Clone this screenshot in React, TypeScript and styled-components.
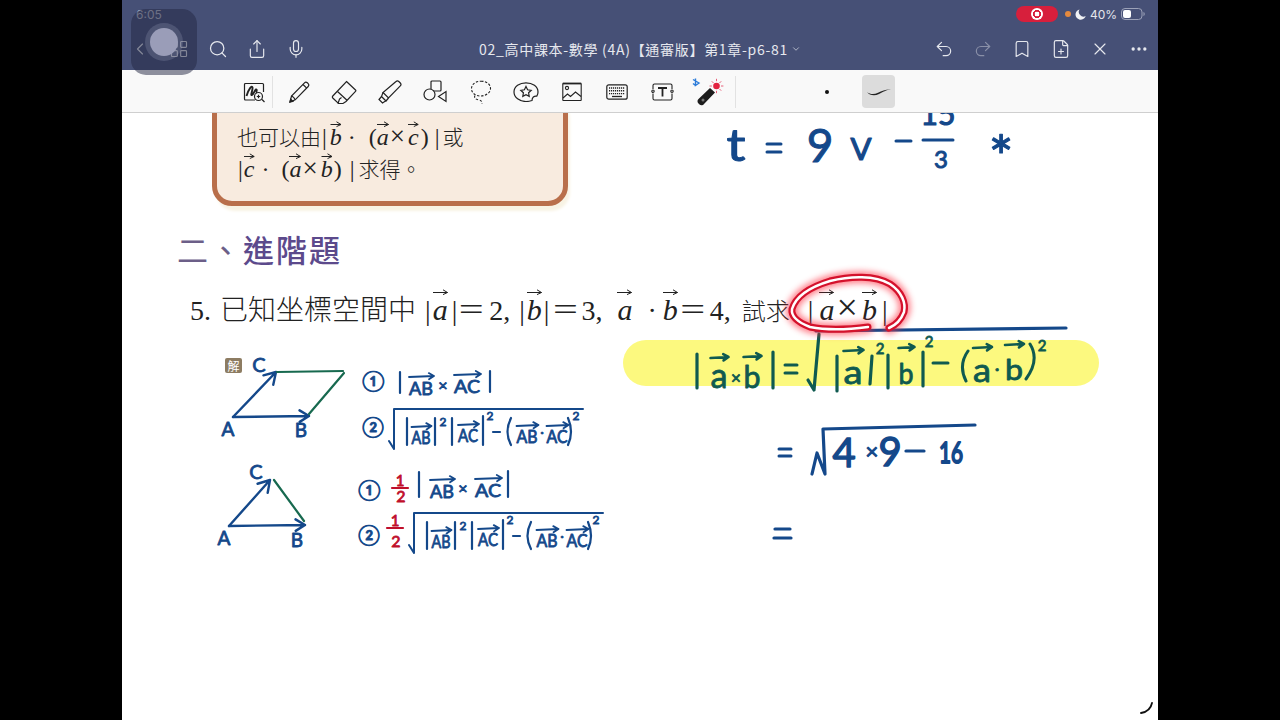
import React from "react";
import styled, { createGlobalStyle } from "styled-components";
import {
  Bookmark,
  ChevronDown,
  ChevronLeft,
  Ellipsis,
  FilePlus,
  LayoutGrid,
  Mic,
  Redo2,
  Search,
  Share,
  Undo2,
  X,
} from "lucide-react";

const CJK = `"Noto Sans CJK TC", "Noto Sans", sans-serif`;
const SERIF = `"Liberation Serif", "Noto Sans CJK TC", serif`;
const BLUE = "#14488a";
const GREEN = "#0f5a50";
const LINE_GREEN = "#17694f";
const RED = "#c00f2b";

const GlobalStyle = createGlobalStyle`
  html, body {
    margin: 0;
    height: 100%;
    background: #000;
  }
  #root {
    height: 100%;
  }
`;

const Screen = styled.div`
  position: relative;
  width: 1036px;
  height: 720px;
  margin: 0 auto;
  display: flex;
  flex-direction: column;
  background: #fff;
  overflow: hidden;
  font-family: ${CJK};
`;

const Header = styled.header`
  height: 70px;
  flex: none;
  background: #465076;
  color: #eceef3;
`;

const StatusBar = styled.div`
  height: 28px;
  display: flex;
  align-items: center;
  justify-content: space-between;
  padding: 0 13px 0 14px;
  font-family: "Inter", sans-serif;
  font-size: 12px;
`;

const Clock = styled.span`
  color: #b8bbc8;
`;

const StatusGroup = styled.div`
  display: flex;
  align-items: center;
`;

const RecordPill = styled.div`
  width: 42px;
  height: 16px;
  border-radius: 8px;
  background: #d71f3c;
  display: flex;
  align-items: center;
  justify-content: center;
`;

const RecordDot = styled.div`
  width: 12px;
  height: 12px;
  border-radius: 50%;
  background: radial-gradient(circle, #fff 0 2.2px, #d71f3c 2.6px 3.8px, #fff 4.2px);
`;

const OrangeDot = styled.div`
  width: 6px;
  height: 6px;
  margin-left: 7px;
  border-radius: 50%;
  background: #e58a3e;
`;

const Percent = styled.span`
  margin-left: 4px;
  color: #e4e6ec;
`;

const NavRow = styled.div`
  height: 42px;
  display: grid;
  grid-template-columns: 1fr auto 1fr;
  align-items: center;
`;

const NavGroup = styled.div<{ $end?: boolean }>`
  display: flex;
  align-items: center;
  gap: 19px;
  justify-content: ${(p) => (p.$end ? "flex-end" : "flex-start")};
  padding: ${(p) => (p.$end ? "0 9px 0 0" : "0 0 0 8px")};
  color: #e6e8ee;
`;

const Title = styled.div`
  display: flex;
  align-items: center;
  gap: 3px;
  font-size: 14px;
  letter-spacing: 0.7px;
  color: #e6e8ee;
  white-space: nowrap;
`;

const Toolbar = styled.div`
  height: 42px;
  flex: none;
  display: flex;
  align-items: center;
  padding-left: 120px;
  background: #f9f9f9;
  border-bottom: 1px solid #cfcfcf;
`;

const ToolCell = styled.div<{ $wide?: boolean }>`
  width: ${(p) => (p.$wide ? "45.5px" : "24px")};
  height: 34px;
  flex: none;
  margin-top: 2px;
  display: flex;
  align-items: center;
  justify-content: center;
`;

const ToolDivider = styled.div<{ $left: number; $right: number }>`
  width: 1px;
  height: 32px;
  flex: none;
  margin: 2px ${(p) => p.$right}px 0 ${(p) => p.$left}px;
  background: #e2e2e2;
`;

const PenDot = styled.div`
  width: 4px;
  height: 4px;
  margin: 2px 0 0 89px;
  flex: none;
  border-radius: 50%;
  background: #111;
`;

const BrushButton = styled.div`
  width: 33px;
  height: 33px;
  margin: 1px 0 0 33px;
  flex: none;
  border-radius: 4px;
  background: #dcdcdc;
  display: flex;
  align-items: center;
  justify-content: center;
`;

const AssistiveTouch = styled.div`
  position: absolute;
  left: 9px;
  top: 9px;
  width: 66px;
  height: 66px;
  border-radius: 15px;
  background: rgba(34, 38, 66, 0.5);
  display: flex;
  align-items: center;
  justify-content: center;
`;

const TouchRing = styled.div`
  width: 38px;
  height: 38px;
  border-radius: 50%;
  background: rgba(170, 174, 200, 0.22);
  display: flex;
  align-items: center;
  justify-content: center;
`;

const TouchKnob = styled.div`
  width: 28px;
  height: 28px;
  border-radius: 50%;
  background: #9a9db8;
`;

const Page = styled.main`
  position: relative;
  flex: 1;
  overflow: hidden;
  background: #fff;
`;

const Callout = styled.div`
  box-sizing: border-box;
  width: 356px;
  height: 113px;
  margin: -20px 0 0 90px;
  padding: 22px 20px 0;
  border: 5px solid #b96f4b;
  border-radius: 20px;
  background: #f8ebdf;
  box-shadow: 3px 6px 3px -1px #f8f3e4;
  font-family: ${SERIF};
  font-size: 24px;
  color: #222;
`;

const CalloutLine = styled.div`
  display: flex;
  align-items: baseline;
  height: 32px;
  line-height: 32px;
  white-space: nowrap;
`;

const Cjk = styled.span<{ $ml?: number; $size?: number }>`
  font-family: ${CJK};
  font-weight: 300;
  font-size: ${(p) => p.$size ?? 21}px;
  line-height: 1;
  margin-left: ${(p) => p.$ml ?? 0}px;
`;

const Heading = styled.h2`
  margin: 23px 0 0 55px;
  font-size: 31px;
  line-height: 40px;
  font-weight: 500;
  letter-spacing: 2px;
  color: #5c4a8c;
`;

const HeadingLead = styled.span`
  font-weight: 400;
  color: #6c5f88;
`;

const Question = styled.div`
  display: flex;
  align-items: baseline;
  height: 40px;
  margin: 18px 0 0 68px;
  font-family: ${SERIF};
  font-size: 28px;
  line-height: 40px;
  color: #222;
  white-space: nowrap;
`;

const Plain = styled.span<{ $ml?: number; $size?: number }>`
  margin-left: ${(p) => p.$ml ?? 0}px;
  ${(p) => (p.$size ? `font-size: ${p.$size}px;` : "")}
`;

const VarBox = styled.span<{ $ml?: number; $size?: number }>`
  position: relative;
  display: inline-block;
  font-style: italic;
  margin-left: ${(p) => p.$ml ?? 0}px;
  ${(p) => (p.$size ? `font-size: ${p.$size}px;` : "")}
`;

const VecArrow = styled.svg<{ $top: number }>`
  position: absolute;
  left: 0;
  top: ${(p) => p.$top}px;
  width: 100%;
  height: 7px;
  overflow: visible;
`;

const SolveBadge = styled.div`
  width: 17px;
  height: 15px;
  margin: 31px 0 0 103px;
  border-radius: 2px;
  background: #8d7c62;
  color: #fff;
  font-size: 12px;
  line-height: 15px;
  text-align: center;
`;

const InkLayer = styled.svg`
  position: absolute;
  left: 0;
  top: 0;
  width: 1036px;
  height: 607px;
  pointer-events: none;
`;

const Stroke = styled.path<{ $c?: string; $w?: number }>`
  fill: none;
  stroke: ${(p) => p.$c ?? BLUE};
  stroke-width: ${(p) => p.$w ?? 2.2};
  stroke-linecap: round;
  stroke-linejoin: round;
`;

const Ink = styled.text<{ $c?: string; $size: number; $w?: number }>`
  font-family: "Lato", "Open Sans", sans-serif;
  font-weight: 400;
  font-size: ${(p) => p.$size}px;
  fill: ${(p) => p.$c ?? BLUE};
  stroke: ${(p) => p.$c ?? BLUE};
  stroke-width: ${(p) => p.$w ?? 0.8};
  stroke-linejoin: round;
  stroke-linecap: round;
  text-anchor: middle;
`;

const Glow = styled.path`
  fill: none;
  stroke: #ff2b3d;
  stroke-width: 12;
  stroke-linecap: round;
  stroke-linejoin: round;
  opacity: 0.6;
  filter: blur(3px);
`;

const Vec = ({
  children,
  w,
  ml,
  size,
  top = 0,
}: {
  children: React.ReactNode;
  w: number;
  ml?: number;
  size?: number;
  top?: number;
}) => (
  <VarBox $ml={ml} $size={size}>
    <VecArrow $top={top} viewBox={`0 0 ${w} 7`}>
      <path
        d={`M0 3.5H${w - 0.5}M${w - 5} 0.8L${w - 0.5} 3.5L${w - 5} 5.6`}
        fill="none"
        stroke="#222"
        strokeWidth="1"
      />
    </VecArrow>
    {children}
  </VarBox>
);

const arrowPath = (x1: number, y1: number, x2: number, y2: number, head = 9) => {
  const a = Math.atan2(y2 - y1, x2 - x1);
  const p1 = [x2 - head * Math.cos(a - 0.55), y2 - head * Math.sin(a - 0.55)];
  const p2 = [x2 - head * Math.cos(a + 0.55), y2 - head * Math.sin(a + 0.55)];
  return `M${x1} ${y1}L${x2} ${y2}M${p1[0]} ${p1[1]}L${x2} ${y2}L${p2[0]} ${p2[1]}`;
};

const InkVec = ({
  x,
  y,
  label,
  size = 17,
  c = BLUE,
  w = 22,
  rise,
  weight = 1.8,
}: {
  x: number;
  y: number;
  label: string;
  size?: number;
  c?: string;
  w?: number;
  rise?: number;
  weight?: number;
}) => {
  const r = rise ?? size;
  return (
    <>
      <Ink x={x} y={y} $size={size} $c={c} textLength={w} lengthAdjust="spacingAndGlyphs">
        {label}
      </Ink>
      <Stroke d={arrowPath(x - w / 2, y - r, x + w / 2 + 1, y - r - 1, 6)} $c={c} $w={weight} />
    </>
  );
};

// |AB|^2|AC|^2-(AB.AC)^2 under a root, placed for the lower row and shifted for the upper one
const RootExpression = ({ dx = 0, dy = 0 }: { dx?: number; dy?: number }) => (
  <g transform={`translate(${dx} ${dy})`}>
    <Stroke d="M409 545L414 553L414 513H603" $w={2} />
    <Stroke d="M427 522V549M455 522V549M472 522V549M503 520V549" />
    <InkVec x={441} y={548} label="AB" size={17} w={19} />
    <Ink x={463} y={530} $size={12}>2</Ink>
    <InkVec x={488} y={546} label="AC" size={17} w={20} />
    <Ink x={510} y={524} $size={12}>2</Ink>
    <Stroke d="M513 536H520" />
    <Stroke d="M531 522Q524 536 531 549M588 522Q594 536 588 549" />
    <InkVec x={547} y={547} label="AB" size={17} w={21} />
    <Ink x={562} y={541} $size={14}>·</Ink>
    <InkVec x={577} y={547} label="AC" size={17} w={21} />
    <Ink x={596} y={524} $size={12}>2</Ink>
  </g>
);

const ZoomNoteIcon = () => (
  <svg width="22" height="22" viewBox="0 0 22 22" fill="none" stroke="#222" strokeWidth="1.2">
    <path d="M12 19H2.5a1 1 0 0 1-1-1V3.5a1 1 0 0 1 1-1h17a1 1 0 0 1 1 1V11" />
    <path d="M3.500 15C6 7 9 4 9.500 6.500S7 15 9 14s2.500-5 4-5.500 0 3 1 3" strokeWidth="1.900" />
    <circle cx="15.500" cy="15.500" r="4" />
    <path d="M19 18.500l2.500 2.500M13.800 15.500h3.400M15.500 13.800v3.400" />
  </svg>
);

const PencilIcon = () => (
  <svg width="24" height="24" viewBox="0 0 24 24" fill="none" stroke="#222" strokeWidth="1.2">
    <path d="M3 22l1.500-6L17.500 2.800a2 2 0 0 1 2.800 0l.9.9a2 2 0 0 1 0 2.800L8.200 19.800z" />
    <path d="M4.500 16c1 .2 3.300 2.400 3.700 3.800M16 4.500l3.700 3.700" />
    <path d="M3 22l.7-2.900 2.200 2.200z" fill="#222" />
  </svg>
);

const EraserIcon = () => (
  <svg width="26" height="25" viewBox="0 0 26 25" fill="none" stroke="#222" strokeWidth="1.2">
    <path d="M15.500 1.500l9 8.500a1 1 0 0 1 0 1.400L15 21.500l-3 2H7.500L1.800 18a1.500 1.500 0 0 1 0-2z" />
    <path d="M6.500 11.500l9.500 8.800M7 23.500l1.500-4.500 2-1.500" />
  </svg>
);

const HighlighterIcon = () => (
  <svg width="24" height="25" viewBox="0 0 24 25" fill="none" stroke="#222" strokeWidth="1.2">
    <path d="M18 1.500a2 2 0 0 1 2.800 0l1.500 1.500a2 2 0 0 1 0 2.800L10.500 18l-5.500-5.500z" />
    <path d="M5 12.500l-1.500 4 4.500 4.500 2.500-3M3.500 16.500l-2.500 3 3.500 3.500 3-2" />
  </svg>
);

const ShapesIcon = () => (
  <svg width="24" height="24" viewBox="0 0 24 24" fill="none" stroke="#222" strokeWidth="1.2">
    <rect x="8" y="1" width="10" height="10" rx="1" />
    <circle cx="6.500" cy="14.500" r="5.500" fill="#f9f9f9" />
    <path d="M23 11.500v10l-7.500-5z" />
  </svg>
);

const LassoIcon = () => (
  <svg width="22" height="24" viewBox="0 0 22 24" fill="none" stroke="#222" strokeWidth="1.1" strokeDasharray="2.4 1.6">
    <path d="M11 1.200c5.500 0 9.500 3 9.500 7.300s-5 7.500-10 7.500c-5 0-9-3-9-7.300S5.500 1.200 11 1.200z" />
    <path d="M5 15.500c-1.500 2.500 1 4 4 4.500s3 2 3 3.500" />
  </svg>
);

const StickerIcon = () => (
  <svg width="26" height="20" viewBox="0 0 26 20" fill="none" stroke="#222" strokeWidth="1.2">
    <path d="M19 18.500c-1.800.7-3.800 1-6 1C6.500 19.500 1 15.500 1 10S6.500.8 13 .8 25 4.500 25 10c0 1.500-.4 3-1.200 4.200-2.800-.4-4.800 1.200-4.800 4.300z" />
    <path d="M13 4.500l1.600 3.300 3.600.5-2.600 2.500.6 3.600-3.200-1.700-3.200 1.700.6-3.600-2.600-2.500 3.600-.5z" />
  </svg>
);

const ImageIcon = () => (
  <svg width="20" height="20" viewBox="0 0 20 20" fill="none" stroke="#222" strokeWidth="1.1">
    <rect x="0.800" y="1.500" width="18.400" height="17" rx="0.500" />
    <path d="M0.800 1.500h18.400" strokeWidth="1.800" />
    <circle cx="5" cy="6" r="1.600" />
    <path d="M1 16l4.500-4 3 2.500 5-4.500 5.500 4.500" />
  </svg>
);

const KeyboardIcon = () => (
  <svg width="22" height="16" viewBox="0 0 22 16" fill="none" stroke="#222">
    <rect x="0.800" y="0.800" width="20.400" height="14.400" rx="2" strokeWidth="1.200" />
    <path d="M3 4h16M3 6.800h16M3 9.600h16" strokeWidth="1.400" strokeDasharray="1.200 0.800" />
    <path d="M6 12.500h10" strokeWidth="1.300" />
  </svg>
);

const TextBoxIcon = () => (
  <svg width="23" height="18" viewBox="0 0 23 18" fill="none" stroke="#222" strokeWidth="1.100">
    <path d="M2 6V2.500a1.500 1.500 0 0 1 1.500-1.500h16A1.500 1.500 0 0 1 21 2.500V6M2 10.500v5A1.500 1.500 0 0 0 3.500 17h16a1.500 1.500 0 0 0 1.500-1.500v-5" />
    <circle cx="2" cy="8.200" r="1.200" />
    <circle cx="21" cy="8.200" r="1.200" />
    <path d="M7 5h9M11.500 5v8.500" strokeWidth="1.800" />
  </svg>
);

const LaserIcon = () => (
  <svg width="34" height="30" viewBox="0 0 34 30" fill="none">
    <path d="M4.500 1.500v7l3.500-2.500-6-3.500M4.500 8.500L2 6.500" stroke="#2b7bd9" strokeWidth="1.400" />
    <path d="M19 11l5 4.500L13 27a3 3 0 0 1-4.500.500l-1-1a3 3 0 0 1 0-4.500z" fill="#1d1d1d" />
    <circle cx="12" cy="23" r="1.500" fill="#777" />
    <circle cx="25.500" cy="9" r="3.300" fill="#e3213f" />
    <path
      d="M25.500 1.800v2.400M25.500 13.800v2.400M18.500 9h2.400M30 9h2.400M20.800 4.300l1.700 1.700M28.500 12l1.700 1.700M30.200 4.300l-1.700 1.700"
      stroke="#e8607a"
      strokeWidth="1"
    />
  </svg>
);

const BrushIcon = () => (
  <svg width="26" height="10" viewBox="0 0 26 10">
    <path d="M1 5c3 2.500 7 2.800 11 .8 4-2 8-3.600 13-3.300-5 .2-8 2.700-12 4.600C8.500 9.200 3.500 8.500 1 5z" fill="#222" />
  </svg>
);

const BatteryMark = styled.svg`
  margin-left: 4px;
`;

const BatteryIcon = () => (
  <BatteryMark width="24" height="12" viewBox="0 0 24 12">
    <rect x="0.500" y="0.500" width="20.500" height="11" rx="3.500" fill="none" stroke="#9ca2b8" />
    <rect x="2" y="2" width="8" height="8" rx="2" fill="#fff" />
    <path d="M22.500 4v4c.8-.3 1.200-1 1.200-2s-.4-1.700-1.200-2z" fill="#9ca2b8" />
  </BatteryMark>
);

const MoonMark = styled.svg`
  margin-left: 4px;
`;

const MoonIcon = () => (
  <MoonMark width="11" height="11" viewBox="0 0 11 11">
    <path d="M4.500.4A5.200 5.200 0 1 0 10.700 7 4.700 4.700 0 0 1 4.500.4z" fill="#f1f2f5" />
  </MoonMark>
);

const TOOLS = [
  PencilIcon,
  EraserIcon,
  HighlighterIcon,
  ShapesIcon,
  LassoIcon,
  StickerIcon,
  ImageIcon,
  KeyboardIcon,
  TextBoxIcon,
  LaserIcon,
];

const LASSO =
  "M868 327C845 330 825 330 810 327C797 322 791 316 792 309C796 296 810 287 830 281C850 276 875 275 890 284C902 292 906 303 904 312C901 320 896 325 889 328";

const App = () => (
  <>
    <GlobalStyle />
    <Screen>
      <Header>
        <StatusBar>
          <Clock>6:05</Clock>
          <StatusGroup>
            <RecordPill>
              <RecordDot />
            </RecordPill>
            <OrangeDot />
            <MoonIcon />
            <Percent>40%</Percent>
            <BatteryIcon />
          </StatusGroup>
        </StatusBar>
        <NavRow>
          <NavGroup>
            <ChevronLeft size={20} strokeWidth={1.4} />
            <LayoutGrid size={20} strokeWidth={1.4} />
            <Search size={20} strokeWidth={1.5} />
            <Share size={20} strokeWidth={1.4} />
            <Mic size={20} strokeWidth={1.4} />
          </NavGroup>
          <Title>
            02_高中課本-數學 (4A)【通審版】第1章-p6-81
            <ChevronDown size={10} strokeWidth={1.6} />
          </Title>
          <NavGroup $end>
            <Undo2 size={20} strokeWidth={1.4} />
            <Redo2 size={20} strokeWidth={1.4} color="#8a90a8" />
            <Bookmark size={20} strokeWidth={1.4} />
            <FilePlus size={20} strokeWidth={1.4} />
            <X size={20} strokeWidth={1.4} />
            <Ellipsis size={20} strokeWidth={2} />
          </NavGroup>
        </NavRow>
      </Header>

      <Toolbar>
        <ToolCell>
          <ZoomNoteIcon />
        </ToolCell>
        <ToolDivider $left={6} $right={3} />
        {TOOLS.map((Icon, i) => (
          <ToolCell $wide key={i}>
            <Icon />
          </ToolCell>
        ))}
        <ToolDivider $left={4} $right={0} />
        <PenDot />
        <BrushButton>
          <BrushIcon />
        </BrushButton>
      </Toolbar>

      <Page>
        <Callout>
          <CalloutLine>
            <Cjk>也可以由</Cjk>
            <Plain $ml={1}>|</Plain>
            <Vec w={11} ml={3}>b</Vec>
            <Plain $ml={6}>·</Plain>
            <Plain $ml={13}>(</Plain>
            <Vec w={12}>a</Vec>
            <Plain $ml={1} $size={27}>×</Plain>
            <Vec w={11} ml={3}>c</Vec>
            <Plain $ml={2}>)</Plain>
            <Plain $ml={6}>|</Plain>
            <Cjk $ml={3}>或</Cjk>
          </CalloutLine>
          <CalloutLine>
            <Plain $ml={1}>|</Plain>
            <Vec w={11} ml={1}>c</Vec>
            <Plain $ml={7}>·</Plain>
            <Plain $ml={12}>(</Plain>
            <Vec w={12}>a</Vec>
            <Plain $ml={1} $size={27}>×</Plain>
            <Vec w={11} ml={3}>b</Vec>
            <Plain $ml={1}>)</Plain>
            <Plain $ml={8}>|</Plain>
            <Cjk $ml={4}>求得。</Cjk>
          </CalloutLine>
        </Callout>

        <Heading>
          <HeadingLead>二、</HeadingLead>進階題
        </Heading>

        <Question>
          <Plain>5.</Plain>
          <Cjk $ml={9} $size={28}>已知坐標空間中</Cjk>
          <Plain $ml={9}>|</Plain>
          <Vec w={15} ml={2} size={30} top={-1}>a</Vec>
          <Plain $ml={4}>|</Plain>
          <Cjk $size={28}>＝</Cjk>
          <Plain $ml={4}>2,</Plain>
          <Plain $ml={9}>|</Plain>
          <Vec w={15} ml={2} size={30} top={-1}>b</Vec>
          <Plain $ml={2}>|</Plain>
          <Cjk $ml={2} $size={28}>＝</Cjk>
          <Plain $ml={2}>3,</Plain>
          <Vec w={15} ml={15} size={30} top={-1}>a</Vec>
          <Plain $ml={15}>·</Plain>
          <Vec w={15} ml={6} size={30} top={-1}>b</Vec>
          <Cjk $ml={1} $size={28}>＝</Cjk>
          <Plain $ml={3}>4,</Plain>
          <Cjk $ml={11} $size={24}>試求</Cjk>
          <Plain $ml={18}>|</Plain>
          <Vec w={15} ml={6} size={30} top={-1}>a</Vec>
          <Plain $ml={2} $size={38}>×</Plain>
          <Vec w={15} ml={4} size={30} top={-1}>b</Vec>
          <Plain $ml={5}>|</Plain>
        </Question>

        <SolveBadge>解</SolveBadge>

        <InkLayer viewBox="122 113 1036 607">
          {/* top right working */}
          <Ink x={736} y={161} $size={44} $w={1} textLength={19} lengthAdjust="spacingAndGlyphs">t</Ink>
          <Stroke d="M767 144H781M767 152H781" $w={3} />
          <Ink x={820} y={162} $size={46} $w={1}>9</Ink>
          <Ink x={861} y={160} $size={31} $w={1.2}>V</Ink>
          <Stroke d="M896 141H911" $w={3} />
          <Ink x={938} y={125} $size={30} $w={1.2}>15</Ink>
          <Stroke d="M923 140H953" $w={3} />
          <Ink x={941} y={168} $size={24} $w={1}>3</Ink>
          <Ink x={1001} y={178} $size={58} $w={1.2}>*</Ink>

          {/* highlight and formula */}
          <rect x={623} y={340} width={476} height={46} rx={23} fill="#fcf97f" />
          <Stroke d="M816 331L1066 328" $c={BLUE} $w={3.2} />
          <Stroke d="M697 354V388M773 352V388" $c={GREEN} $w={3.2} />
          <InkVec x={719} y={388} label="a" size={34} c={GREEN} w={17} rise={30} weight={2.6} />
          <Ink x={736} y={384} $size={17} $c={GREEN}>×</Ink>
          <InkVec x={752} y={388} label="b" size={30} c={GREEN} w={17} rise={31} weight={2.6} />
          <Stroke d="M785 365H797M785 373H797" $c={GREEN} $w={3} />
          <Stroke d="M808 380L814 390L819 334" $c={GREEN} $w={3.2} />
          <Stroke d="M837 356V391M872 356L870 384M888 355V388M923 352V386" $c={GREEN} $w={3.2} />
          <InkVec x={853} y={384} label="a" size={32} c={GREEN} w={19} rise={33} weight={2.6} />
          <Ink x={880} y={354} $size={15} $c={GREEN}>2</Ink>
          <InkVec x={906} y={384} label="b" size={28} c={GREEN} w={15} rise={36} weight={2.6} />
          <Ink x={929} y={347} $size={15} $c={GREEN}>2</Ink>
          <Stroke d="M933 363H948" $c={GREEN} $w={3} />
          <Stroke d="M968 351Q958 365 966 381M1030 344Q1040 360 1026 379" $c={GREEN} $w={3} />
          <InkVec x={982} y={382} label="a" size={32} c={GREEN} w={18} rise={34} weight={2.6} />
          <Ink x={997} y={375} $size={18} $c={GREEN}>·</Ink>
          <InkVec x={1014} y={380} label="b" size={28} c={GREEN} w={18} rise={35} weight={2.6} />
          <Ink x={1042} y={351} $size={15} $c={GREEN}>2</Ink>

          {/* red lasso */}
          <Glow d={LASSO} />
          <Stroke d={LASSO} $c="#d4122c" $w={7} />
          <Stroke d={LASSO} $c="#fff" $w={2.5} />

          {/* parallelogram */}
          <Stroke d={arrowPath(233, 417, 276, 372, 13)} $w={2.4} />
          <Stroke d={arrowPath(233, 417, 309, 416, 11)} $w={2.4} />
          <Stroke d="M277 372L343 371M344 373L309 414" $c={LINE_GREEN} />
          <Ink x={259} y={372} $size={20}>C</Ink>
          <Ink x={228} y={436} $size={19}>A</Ink>
          <Ink x={301} y={437} $size={19}>B</Ink>
          <Ink x={373} y={388} $size={20} $w={0.8}>①</Ink>
          <Stroke d="M400 372V393M490 371V392" />
          <InkVec x={421} y={395} label="AB" size={18} w={24} />
          <Ink x={443} y={391} $size={16}>×</Ink>
          <InkVec x={467} y={393} label="AC" size={18} w={26} />
          <Ink x={373} y={434} $size={20} $w={0.8}>②</Ink>
          <RootExpression dx={-20} dy={-104} />

          {/* triangle */}
          <Stroke d={arrowPath(229, 526, 270, 480, 13)} $w={2.4} />
          <Stroke d={arrowPath(229, 526, 305, 525, 11)} $w={2.4} />
          <Stroke d="M274 480L304 521" $c={LINE_GREEN} />
          <Ink x={256} y={479} $size={20}>C</Ink>
          <Ink x={224} y={545} $size={19}>A</Ink>
          <Ink x={297} y={547} $size={19}>B</Ink>
          <Ink x={369} y={497} $size={20} $w={0.8}>①</Ink>
          <Ink x={400} y={486} $size={15} $c={RED}>1</Ink>
          <Stroke d="M392 488H408" $c={RED} />
          <Ink x={401} y={502} $size={16} $c={RED}>2</Ink>
          <Stroke d="M419 472V497M508 471V497" />
          <InkVec x={442} y={498} label="AB" size={18} w={24} />
          <Ink x={463} y={494} $size={16}>×</Ink>
          <InkVec x={488} y={497} label="AC" size={18} w={26} />
          <Ink x={369} y={542} $size={20} $w={0.8}>②</Ink>
          <Ink x={395} y={526} $size={15} $c={RED}>1</Ink>
          <Stroke d="M387 528H403" $c={RED} />
          <Ink x={396} y={547} $size={16} $c={RED}>2</Ink>
          <RootExpression />

          {/* second step */}
          <Stroke d="M779 449H791M779 456H791" $w={3} />
          <Stroke d="M812 474L817 453L825 474L823 429L975 425" $w={3.2} />
          <Ink x={844} y={467} $size={40} $w={1.4}>4</Ink>
          <Ink x={872} y={459} $size={22} $w={1}>×</Ink>
          <Ink x={890} y={466} $size={40} $w={1.4}>9</Ink>
          <Stroke d="M906 451H924" $w={3.2} />
          <Ink x={951} y={463} $size={28} $w={2} textLength={24} lengthAdjust="spacingAndGlyphs">16</Ink>
          <Stroke d="M775 529H790M774 538H791" $w={3.2} />

          {/* page resize mark */}
          <Stroke d="M1141 713C1147 712 1151 708 1152 703" $c="#111" $w={1.8} />
        </InkLayer>
      </Page>

      <AssistiveTouch>
        <TouchRing>
          <TouchKnob />
        </TouchRing>
      </AssistiveTouch>
    </Screen>
  </>
);

export default App;
